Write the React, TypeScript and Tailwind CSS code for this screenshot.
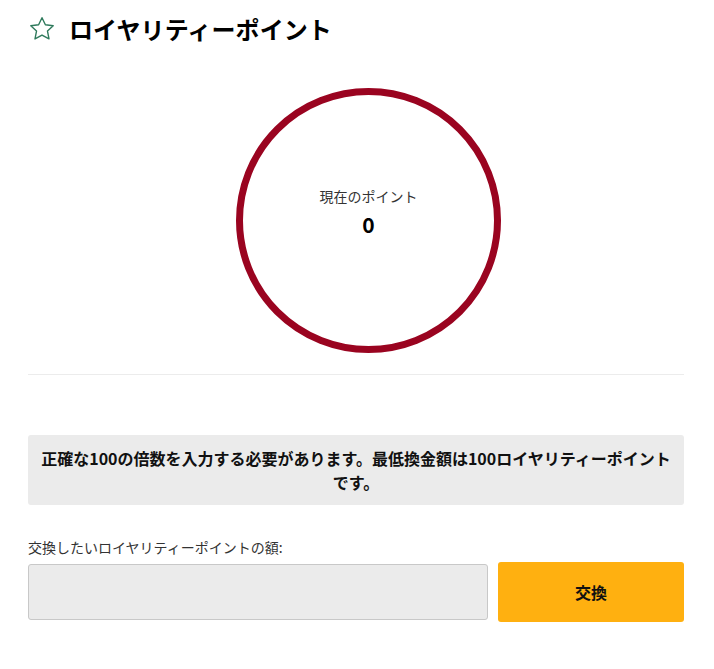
import React, { useState } from "react";

const font = { fontFamily: '"Noto Sans CJK JP", "Noto Sans", sans-serif' };

function StarIcon() {
  return (
    <svg width="28" height="28" viewBox="0 0 24 24" fill="none" stroke="#2f7a5c" strokeWidth="1.2" strokeLinejoin="round">
      <path d="M12 2.3l2.9 6.1 6.7.8-4.9 4.6 1.3 6.7L12 17.2l-6 3.3 1.3-6.7-4.9-4.6 6.7-.8z" />
    </svg>
  );
}

export default function App() {
  const [amount, setAmount] = useState("");
  const points = 0;

  return (
    <div className="min-h-screen w-full bg-white pl-[28px] pr-[30px] text-black" style={font}>
      <div className="flex h-[56px] items-center gap-[13px] pt-[1px]">
        <StarIcon />
        <h1 className="text-[24px] font-bold leading-none tracking-[0.1px]">ロイヤリティーポイント</h1>
      </div>

      <div className="flex pl-[208px] pt-[32px]">
        <div className="flex h-[265px] w-[265px] flex-col items-center rounded-full border-[7px] border-[#9a0420] pt-[91px]">
          <span className="text-[14px] leading-[20px] text-[#333]">現在のポイント</span>
          <span className="mt-[6px] text-[21px] font-bold leading-[24px]">{points}</span>
        </div>
      </div>

      <div className="mt-[21px] h-px w-full bg-[#ececec]" />

      <div className="mt-[60px] rounded-[3px] bg-[#ebebeb] px-[10px] py-[11px] text-center text-[16px] font-bold leading-[24px] text-[#111]">
        正確な100の倍数を入力する必要があります。最低換金額は100ロイヤリティーポイントです。
      </div>

      <div className="mt-[32px] text-[14px] leading-[20px] text-[#333]">交換したいロイヤリティーポイントの額:</div>

      <div className="mt-[5px] flex items-center gap-[10px]">
        <input
          value={amount}
          onChange={(e) => setAmount(e.target.value)}
          className="h-[56px] flex-1 rounded-[3px] border border-[#c8c8c8] bg-[#ebebeb] px-3 text-[15px] outline-none"
        />
        <button className="h-[60px] w-[186px] rounded-[3px] bg-[#ffb010] text-[16px] font-bold text-[#111]">
          交換
        </button>
      </div>
    </div>
  );
}
